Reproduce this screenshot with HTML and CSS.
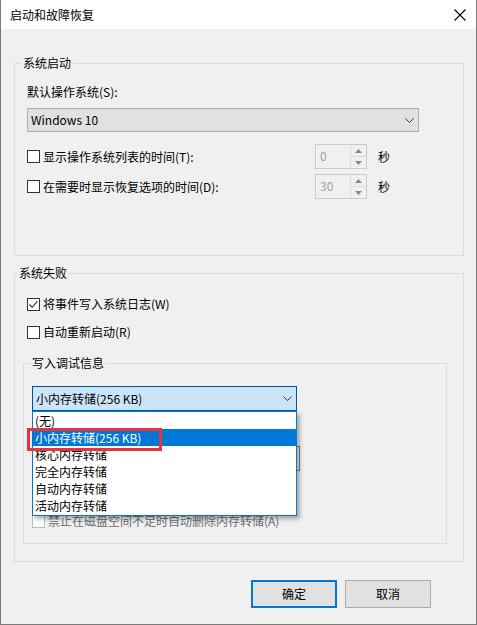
FILE: index.html
```html
<!DOCTYPE html>
<html lang="zh-CN">
<head>
    <meta charset="UTF-8">
    <meta name="viewport" content="width=device-width, initial-scale=1.0">
    <title>启动和故障恢复</title>
    <link rel="stylesheet" href="styles.css">
</head>
<body>
    <div class="window">
        <div class="titlebar">
            <span class="title">启动和故障恢复</span>
            <svg class="close" width="12" height="12" viewBox="0 0 12 12">
                <path d="M0.5 0.5 L11.5 11.5 M11.5 0.5 L0.5 11.5" stroke="#000" stroke-width="1.1" fill="none"/>
            </svg>
        </div>
        <div class="content">
            <fieldset class="group group--startup">
                <legend>系统启动</legend>
                <div class="field-label">默认操作系统(S):</div>
                <div class="combo combo--os">
                    <span>Windows 10</span>
                    <svg class="chevron" width="9" height="5" viewBox="0 0 9 5"><path d="M0.5 0.5 L4.5 4.5 L8.5 0.5" stroke="#333" fill="none"/></svg>
                </div>
                <div class="timer-row timer-row--first">
                    <label class="check check--timer"><span class="box"></span>显示操作系统列表的时间(T):</label>
                    <div class="spin">
                        <span class="spin-value">0</span>
                        <div class="spin-buttons">
                            <span class="spin-btn"><svg width="7" height="4" viewBox="0 0 7 4"><path d="M0 4 L3.5 0 L7 4 Z" fill="#8a8a8a"/></svg></span>
                            <span class="spin-btn"><svg width="7" height="4" viewBox="0 0 7 4"><path d="M0 0 L3.5 4 L7 0 Z" fill="#8a8a8a"/></svg></span>
                        </div>
                    </div>
                    <span class="unit">秒</span>
                </div>
                <div class="timer-row">
                    <label class="check check--timer"><span class="box"></span>在需要时显示恢复选项的时间(D):</label>
                    <div class="spin">
                        <span class="spin-value">30</span>
                        <div class="spin-buttons">
                            <span class="spin-btn"><svg width="7" height="4" viewBox="0 0 7 4"><path d="M0 4 L3.5 0 L7 4 Z" fill="#8a8a8a"/></svg></span>
                            <span class="spin-btn"><svg width="7" height="4" viewBox="0 0 7 4"><path d="M0 0 L3.5 4 L7 0 Z" fill="#8a8a8a"/></svg></span>
                        </div>
                    </div>
                    <span class="unit">秒</span>
                </div>
            </fieldset>

            <fieldset class="group group--failure">
                <legend>系统失败</legend>
                <label class="check check--log">
                    <span class="box box--checked">
                        <svg width="11" height="11" viewBox="0 0 11 11"><path d="M1.5 5.5 L4.2 8.3 L9.5 2" stroke="#222" stroke-width="1.1" fill="none"/></svg>
                    </span>将事件写入系统日志(W)
                </label>
                <label class="check check--restart"><span class="box"></span>自动重新启动(R)</label>

                <fieldset class="group group--debug">
                    <legend>写入调试信息</legend>
                    <div class="dump-select">
                        <div class="combo combo--open">
                            <span>小内存转储(256 KB)</span>
                            <svg class="chevron" width="9" height="5" viewBox="0 0 9 5"><path d="M0.5 0.5 L4.5 4.5 L8.5 0.5" stroke="#333" fill="none"/></svg>
                        </div>
                        <ul class="dropdown">
                            <li>(无)</li>
                            <li class="selected">小内存转储(256 KB)</li>
                            <li>核心内存转储</li>
                            <li>完全内存转储</li>
                            <li>自动内存转储</li>
                            <li>活动内存转储</li>
                        </ul>
                        <div class="marker"></div>
                    </div>
                    <!-- dump file field, mostly hidden behind the open list -->
                    <div class="path-field"></div>
                    <label class="check check--disabled"><span class="box"></span>禁止在磁盘空间不足时自动删除内存转储(A)</label>
                </fieldset>
            </fieldset>

            <div class="buttons">
                <button class="btn btn--default">确定</button>
                <button class="btn">取消</button>
            </div>
        </div>
    </div>
</body>
</html>
```

FILE: styles.css
```css
* {
    box-sizing: border-box;
}
body {
    margin: 0;
    background: #fff;
    font: 12px/16px "Noto Sans CJK SC", "Noto Sans", sans-serif;
    color: #000;
}
.window {
    width: 477px;
    height: 625px;
    background: #f0f0f0;
    border: 1px solid #7a7a7a;
    border-top: none;
    display: flex;
    flex-direction: column;
}
.titlebar {
    height: 29px;
    background: #fff;
    display: flex;
    align-items: center;
    justify-content: space-between;
    padding: 0 10px 0 9px;
}
.close {
    display: block;
}
.content {
    padding: 26px 12px 0 13px;
    display: flex;
    flex-direction: column;
}

/* group boxes */
.group {
    margin: 0;
    border: 1px solid #dcdcdc;
    min-width: 0;
}
.group legend {
    padding: 0 2px;
    line-height: 16px;
}
.group--startup {
    padding: 0 12px 56px 12px;
}
.group--startup legend,
.group--failure legend {
    margin-left: -6px;
}
.group--failure {
    margin-top: 9px;
    padding: 0 16px 17px 8px;
}
.group--debug {
    margin-top: 15px;
    padding: 0 8px 14px 8px;
}
.group--debug legend {
    margin-left: -2px;
}

.field-label {
    margin-top: 13px;
}

/* combo boxes */
.combo {
    display: flex;
    align-items: center;
    justify-content: space-between;
    height: 24px;
    padding: 0 4px 0 3px;
    border: 1px solid #adadad;
    background: #e1e1e1;
}
.combo--os {
    width: 392px;
    margin-top: 8px;
}
.combo--open {
    height: 25px;
    background: #cce4f7;
    border-color: #005499;
}
.chevron {
    display: block;
}

/* checkboxes */
.check {
    display: flex;
    align-items: center;
    height: 16px;
    white-space: nowrap;
}
.box {
    width: 13px;
    height: 13px;
    margin-right: 3px;
    border: 1px solid #333;
    background: #fff;
    display: flex;
    align-items: center;
    justify-content: center;
    flex: none;
}
.box--checked svg {
    display: block;
}
.check--log {
    margin: 15px 0 0 4px;
}
.check--restart {
    margin: 12px 0 0 4px;
}

/* timeout rows */
.timer-row {
    display: flex;
    align-items: center;
    height: 25px;
    margin-top: 5px;
}
.timer-row--first {
    margin-top: 12px;
}
.check--timer {
    width: 288px;
}
.spin {
    width: 52px;
    height: 25px;
    border: 1px solid #cccccc;
    display: flex;
}
.spin-value {
    flex: 1;
    padding: 3px 0 0 4px;
    color: #a0a0a0;
}
.spin-buttons {
    width: 16px;
    display: flex;
    flex-direction: column;
    border-left: 1px solid #dcdcdc;
}
.spin-btn {
    flex: 1;
    display: flex;
    align-items: center;
    justify-content: center;
}
.spin-btn + .spin-btn {
    border-top: 1px solid #dcdcdc;
}
.spin-btn svg {
    display: block;
}
.unit {
    margin-left: 11px;
}

/* dump type with open list */
.dump-select {
    position: relative;
    width: 265px;
    margin-top: 15px;
}
.dropdown {
    position: absolute;
    top: 25px;
    left: 0;
    width: 265px;
    height: 105px;
    margin: 0;
    padding: 0;
    list-style: none;
    background: #fff;
    border: 1px solid #0078d7;
    box-shadow: 3px 3px 4px rgba(0, 0, 0, 0.3);
    z-index: 2;
}
.dropdown li {
    height: 17px;
    line-height: 17px;
    padding-left: 2px;
}
.dropdown .selected {
    background: #0078d7;
    color: #fff;
}
.marker {
    position: absolute;
    left: -5px;
    top: 42px;
    width: 135px;
    height: 23px;
    border: 3px solid #e8333f;
    z-index: 3;
}
.path-field {
    width: 268px;
    height: 25px;
    margin-top: 35px;
    border: 1px solid #7a7a7a;
    background: #f0f0f0;
}
.check--disabled {
    margin-top: 42px;
    color: #6d6d6d;
}
.check--disabled .box {
    border-color: #bcbcbc;
    background: #fff;
}

/* buttons */
.buttons {
    display: flex;
    justify-content: flex-end;
    gap: 8px;
    margin: 18px 33px 0 0;
}
.btn {
    width: 86px;
    height: 28px;
    font: inherit;
    color: #000;
    background: #e1e1e1;
    border: 1px solid #adadad;
    padding: 0;
}
.btn--default {
    border: 2px solid #0078d7;
}
```
